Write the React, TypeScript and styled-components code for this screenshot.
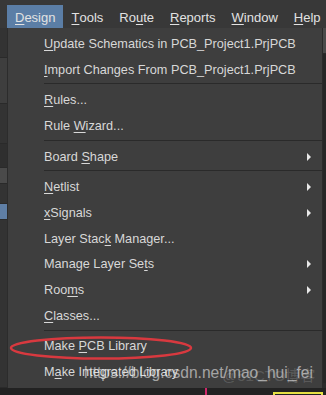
import React from 'react';
import styled, { createGlobalStyle } from 'styled-components';

const GlobalStyle = createGlobalStyle`
	html, body {
		margin: 0;
		padding: 0;
		background: #2b2b2b;
	}
	* {
		box-sizing: border-box;
	}
`;

// [label, index of the underlined letter, has submenu]
type Item = [string, number, boolean] | 'sep';

const topMenus: [string, number][] = [
	['Design', 0],
	['Tools', 0],
	['Route', 2],
	['Reports', 0],
	['Window', 0],
	['Help', 0],
];

const designItems: Item[] = [
	['Update Schematics in PCB_Project1.PrjPCB', 0, false],
	['Import Changes From PCB_Project1.PrjPCB', 0, false],
	'sep',
	['Rules...', 0, false],
	['Rule Wizard...', 5, false],
	'sep',
	['Board Shape', 6, true],
	'sep',
	['Netlist', 0, true],
	['xSignals', 0, true],
	['Layer Stack Manager...', 10, false],
	['Manage Layer Sets', 15, true],
	['Rooms', 3, true],
	['Classes...', 0, false],
	'sep',
	['Make PCB Library', 5, false],
	['Make Integrated Library', 1, false],
];

function Label({ text, idx }: { text: string; idx: number }) {
	return (
		<>
			{text.slice(0, idx)}
			<Mnemonic>{text[idx]}</Mnemonic>
			{text.slice(idx + 1)}
		</>
	);
}

export default function App() {
	return (
		<>
			<GlobalStyle />
			<Screen>
				<MenuBar>
					{topMenus.map(([name, idx], i) => (
						<TopItem key={name} active={i === 0}>
							<Label text={name} idx={idx} />
						</TopItem>
					))}
				</MenuBar>
				<Body>
					<LeftStrip>
						<Band tone="#333333" h={30} />
						<Band tone="#3e3e3e" h={46} />
						<Band tone="#333333" h={40} />
						<Band tone="#2f2f2f" h={24} />
						<Band tone="#4a4a4a" h={16} />
						<Band tone="#333333" h={20} />
						<Band tone="#5f7fa6" h={16} />
						<Band tone="#333333" h={168} />
					</LeftStrip>
					<Dropdown>
						{designItems.map((it, i) =>
							it === 'sep' ? (
								<Separator key={i} />
							) : (
								<Row key={i}>
									<RowText>
										<Label text={it[0]} idx={it[1]} />
									</RowText>
									{it[2] && <Arrow />}
								</Row>
							),
						)}
					</Dropdown>
					<RightStrip>
						<Band tone="#4a4a4a" h={26} />
						<Band tone="#262626" h={330} />
					</RightStrip>
				</Body>
				<Footer>
					<MagentaMark />
					<YellowBox />
				</Footer>

				<Circle width="326" height="395">
					<ellipse cx="101" cy="348" rx="90" ry="10.5" fill="none" stroke="#d8393f" strokeWidth="2.5" />
				</Circle>
				<Watermark>https://blog.csdn.net/mao_hui_fei</Watermark>
				<WatermarkFaint>@51CTO博客</WatermarkFaint>
			</Screen>
		</>
	);
}

const Screen = styled.div`
	position: relative;
	width: 326px;
	height: 395px;
	overflow: hidden;
	background: #2b2b2b;
	font-family: 'Liberation Sans', Arial, sans-serif;
	font-size: 13px;
	color: #dcdcdc;
`;

const MenuBar = styled.div`
	display: flex;
	height: 28px;
	padding: 5px 0 0 7px;
	background: #383838;
`;

const TopItem = styled.div<{ active?: boolean }>`
	height: 23px;
	padding: 1px 8px 0;
	display: flex;
	align-items: center;
	white-space: nowrap;
	color: #e2e2e2;
	background: ${(p) => (p.active ? '#5b7ea6' : 'transparent')};
`;

const Mnemonic = styled.span`
	text-decoration: underline;
	text-underline-offset: 2px;
`;

const Body = styled.div`
	display: flex;
	height: 360px;
`;

const LeftStrip = styled.div`
	width: 7px;
	display: flex;
	flex-direction: column;
`;

const RightStrip = styled.div`
	flex: 1;
	display: flex;
	flex-direction: column;
	border-left: 1px solid #2a2a2a;
`;

const Band = styled.div<{ tone: string; h: number }>`
	height: ${(p) => p.h}px;
	background: ${(p) => p.tone};
	border-bottom: 1px solid #2a2a2a;
`;

const Dropdown = styled.div`
	width: 315px;
	padding: 2px 0 4px;
	background: #3e3e3e;
	border-left: 1px solid #2c2c2c;
	display: flex;
	flex-direction: column;
`;

const Row = styled.div`
	height: 26px;
	display: flex;
	align-items: center;
	padding: 2px 0 0 36px;
	font-size: 12.7px;
`;

const RowText = styled.div`
	flex: 1;
	white-space: nowrap;
	color: #d8d8d8;
`;

const Arrow = styled.div`
	width: 0;
	height: 0;
	margin-right: 11px;
	border-top: 4px solid transparent;
	border-bottom: 4px solid transparent;
	border-left: 4px solid #e8e8e8;
`;

const Separator = styled.div`
	height: 5px;
	margin-left: 36px;
	display: flex;
	align-items: center;
	&::after {
		content: '';
		flex: 1;
		height: 1px;
		background: #2a2a2a;
	}
`;

const Footer = styled.div`
	display: flex;
	height: 7px;
	background: #222222;
	padding-left: 205px;
	gap: 66px;
`;

const MagentaMark = styled.div`
	width: 2px;
	height: 7px;
	background: #d0266a;
`;

const YellowBox = styled.div`
	width: 50px;
	margin-top: 4px;
	border: 2px solid #e5e044;
	border-bottom: none;
`;

const Circle = styled.svg`
	position: absolute;
	left: 0;
	top: 0;
	pointer-events: none;
`;

const Watermark = styled.div`
	position: absolute;
	left: 84px;
	top: 364px;
	font-family: 'Liberation Sans', Arial, sans-serif;
	font-size: 15.6px;
	color: rgba(235, 235, 235, 0.6);
	white-space: nowrap;
`;

const WatermarkFaint = styled.div`
	position: absolute;
	left: 222px;
	top: 364px;
	font-family: 'Liberation Sans', 'Noto Sans CJK SC', sans-serif;
	font-size: 15px;
	color: rgba(235, 235, 235, 0.18);
	white-space: nowrap;
`;
